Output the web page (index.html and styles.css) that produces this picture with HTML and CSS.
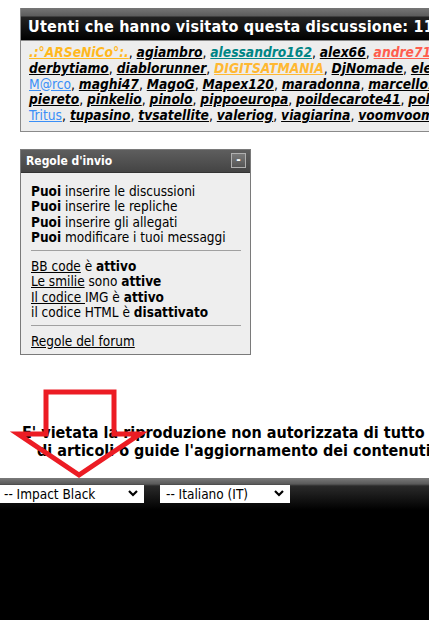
FILE: index.html
```html
<!DOCTYPE html>
<html lang="it">
<head>
    <meta charset="UTF-8">
    <title>Forum - Discussione</title>
    <link rel="stylesheet" href="styles.css">
</head>
<body>
<div class="page">
    <div class="content">
        <div class="visitors">
            <div class="visitors-head">Utenti che hanno visitato questa discussione: 116 (0 membri e 116 ospiti)</div>
            <div class="visitors-body">
                <a class="u gold" href="#">.:°ARSeNiCo°:.</a>, <a class="u" href="#">agiambro</a>, <a class="u teal" href="#">alessandro162</a>, <a class="u" href="#">alex66</a>, <a class="u red" href="#">andre71</a>, <a class="u" href="#">antonio</a><br>
                <a class="u" href="#">derbytiamo</a>, <a class="u" href="#">diablorunner</a>, <a class="u orange" href="#">DIGITSATMANIA</a>, <a class="u" href="#">DjNomade</a>, <a class="u" href="#">elettronico</a><br>
                <a class="u plain" href="#">M@rco</a>, <a class="u" href="#">maghi47</a>, <a class="u" href="#">MagoG</a>, <a class="u" href="#">Mapex120</a>, <a class="u" href="#">maradonna</a>, <a class="u" href="#">marcello1</a><br>
                <a class="u" href="#">piereto</a>, <a class="u" href="#">pinkelio</a>, <a class="u" href="#">pinolo</a>, <a class="u" href="#">pippoeuropa</a>, <a class="u" href="#">poildecarote41</a>, <a class="u" href="#">polistena</a><br>
                <a class="u plain" href="#">Tritus</a>, <a class="u" href="#">tupasino</a>, <a class="u" href="#">tvsatellite</a>, <a class="u" href="#">valeriog</a>, <a class="u" href="#">viagiarina</a>, <a class="u" href="#">voomvoom</a>
            </div>
        </div>

        <div class="rules">
            <div class="rules-head">
                <span>Regole d'invio</span>
                <span class="collapse">-</span>
            </div>
            <div class="rules-body">
                <div><b>Puoi</b> inserire le discussioni</div>
                <div><b>Puoi</b> inserire le repliche</div>
                <div><b>Puoi</b> inserire gli allegati</div>
                <div><b>Puoi</b> modificare i tuoi messaggi</div>
                <hr>
                <div><a href="#">BB code</a> è <b>attivo</b></div>
                <div><a href="#">Le smilie</a> sono <b>attive</b></div>
                <div><a href="#">Il codice </a>IMG è <b>attivo</b></div>
                <div>il codice HTML è <b>disattivato</b></div>
                <hr>
                <div><a href="#">Regole del forum</a></div>
            </div>
        </div>

        <div class="notice">
            <div class="notice-line">E' vietata la riproduzione non autorizzata di tutto o parte del materiale</div>
            <div class="notice-line second">di articoli o guide l'aggiornamento dei contenuti è a cura dello staff</div>
            <svg class="arrow" width="160" height="92" viewBox="0 0 160 92">
                <path d="M46 3 H114 V45 H140 L79 86 L18 45 H46 Z" fill="none" stroke="#ec1c24" stroke-width="5" stroke-linejoin="miter"/>
            </svg>
        </div>
    </div>

    <div class="footer">
        <div class="footer-bar">
            <div class="select first">
                <span>-- Impact Black</span>
                <svg width="10" height="7" viewBox="0 0 10 7"><path d="M1 1 L5 5 L9 1" fill="none" stroke="#000" stroke-width="2.2"/></svg>
            </div>
            <div class="select second">
                <span>-- Italiano (IT)</span>
                <svg width="10" height="7" viewBox="0 0 10 7"><path d="M1 1 L5 5 L9 1" fill="none" stroke="#000" stroke-width="2.2"/></svg>
            </div>
        </div>
    </div>
</div>
</body>
</html>
```

FILE: styles.css
```css
body {
    margin: 0;
    background-color: #fff;
    font-family: "DejaVu Sans", Verdana, sans-serif;
}

.page {
    width: 429px;
    height: 620px;
    overflow: hidden;
    display: flex;
    flex-direction: column;
    background-color: #fff;
}

.content {
    width: 900px;
    padding: 8px 20px 0 20px;
}

/* utenti che hanno visitato */
.visitors {
    width: 700px;
    border: 1px solid #8a8a8a;
    border-top: none;
}

.visitors-head {
    height: 32px;
    line-height: 38px;
    padding-left: 7px;
    background: linear-gradient(#767676 0, #5c5c5c 8px, #222 9px, #000 32px);
    color: #fff;
    font-family: "DejaVu Sans Condensed", "DejaVu Sans", sans-serif;
    font-weight: bold;
    font-size: 16px;
    letter-spacing: 0.2px;
    white-space: nowrap;
    border-bottom: 1px solid #888;
}

.visitors-body {
    background-color: #ededed;
    padding: 4px 8px 7px 8px;
    font-family: "DejaVu Sans Condensed", "DejaVu Sans", sans-serif;
    font-size: 13.7px;
    line-height: 15.8px;
    white-space: nowrap;
}

.u {
    color: #000;
    font-weight: bold;
    font-style: italic;
}

.u.gold {
    color: #ffb81f;
}

.u.orange {
    color: #ffb833;
}

.u.teal {
    color: #008585;
}

.u.red {
    color: #ff5d4e;
}

.u.plain {
    color: #3a8ff7;
    font-weight: normal;
    font-style: normal;
}

/* regole d'invio */
.rules {
    width: 229px;
    margin-top: 17px;
    border: 1px solid #7a7a7a;
    background-color: #eeeeee;
}

.rules-head {
    height: 22px;
    display: flex;
    align-items: center;
    justify-content: space-between;
    padding: 0 4px 0 5px;
    background: linear-gradient(#5e5e5e, #444);
    color: #fff;
    font-family: "DejaVu Sans Condensed", "DejaVu Sans", sans-serif;
    font-size: 12px;
    font-weight: bold;
    border-bottom: 1px solid #333;
}

.collapse {
    width: 13px;
    height: 13px;
    border: 1px solid #b0b0b0;
    background: linear-gradient(#7a7a7a, #555);
    color: #fff;
    font-size: 12px;
    line-height: 12px;
    text-align: center;
}

.rules-body {
    padding: 11px 9px 4px 10px;
    font-family: "DejaVu Sans Condensed", "DejaVu Sans", sans-serif;
    font-size: 13.5px;
    line-height: 15.3px;
    color: #000;
}

.rules-body a {
    color: #000;
}

.rules-body hr {
    border: none;
    border-top: 1px solid #a0a0a0;
    margin: 5px 0 8px 0;
}

/* avviso */
.notice {
    position: relative;
    margin-top: 69px;
    font-family: "DejaVu Sans Condensed", "DejaVu Sans", sans-serif;
    font-weight: bold;
    font-size: 16px;
    line-height: 18px;
    white-space: nowrap;
    color: #000;
}

.notice-line {
    padding-left: 2px;
}

.notice-line.second {
    padding-left: 17px;
}

.arrow {
    position: absolute;
    left: -20px;
    top: -35px;
}

/* barra in fondo */
.footer {
    flex: 1;
    margin-top: 18px;
    background: linear-gradient(#7a7a7a 0, #5a5a5a 6px, #2a2a2a 8px, #000 32px);
}

.footer-bar {
    display: flex;
    gap: 16px;
    padding-top: 7px;
}

.select {
    height: 18px;
    display: flex;
    align-items: center;
    justify-content: space-between;
    background-color: #fff;
    font-family: "DejaVu Sans Condensed", "DejaVu Sans", sans-serif;
    font-size: 13.5px;
    color: #000;
}

.select.first {
    width: 134px;
    padding: 0 6px 0 4px;
}

.select.second {
    width: 118px;
    padding: 0 6px 0 6px;
}
```
